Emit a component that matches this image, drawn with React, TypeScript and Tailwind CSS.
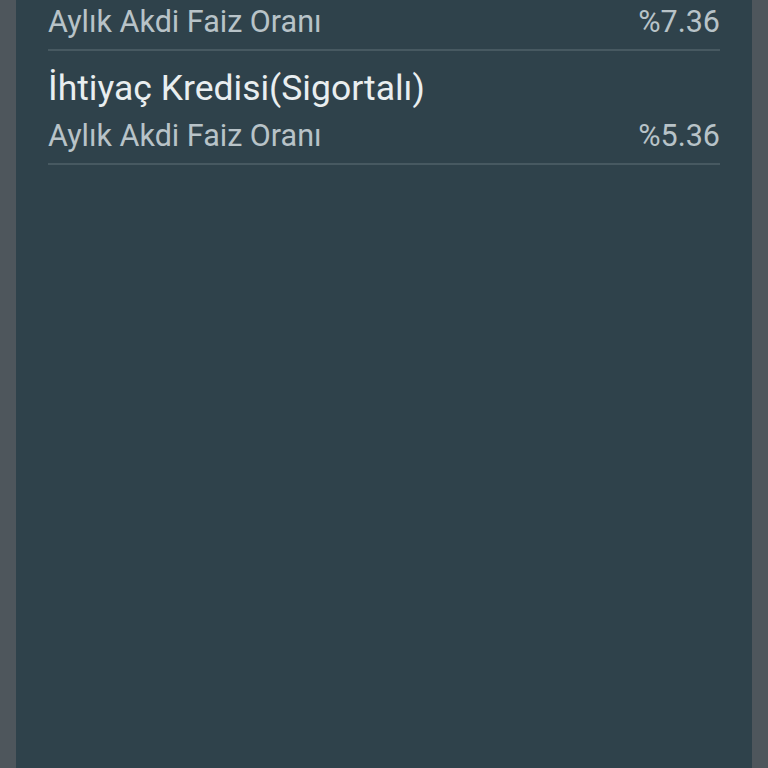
import React from 'react';

const rates = [
	{ title: null, label: 'Aylık Akdi Faiz Oranı', value: '%7.36' },
	{ title: 'İhtiyaç Kredisi(Sigortalı)', label: 'Aylık Akdi Faiz Oranı', value: '%5.36' },
];

export default function App() {
	return (
		<div
			className="flex h-[768px] w-[768px] bg-[#4e565c]"
			style={{ fontFamily: 'Roboto, "Noto Sans", sans-serif' }}>
			<div className="w-4 shrink-0" />
			<div className="flex-1 bg-[#2f424b] px-8 pt-[3.6px]">
				{rates.map((r, i) => (
					<div key={i} className={r.title ? 'pt-[16px]' : ''}>
						{r.title && (
							<div className="text-[35.5px] leading-[42px] text-[#e9eef0]">{r.title}</div>
						)}
						<div
							className={`flex items-baseline justify-between text-[30.5px] leading-[36px] text-[#b8c3c8] ${
								r.title ? 'mt-[9.5px]' : ''
							}`}>
							<span>{r.label}</span>
							<span>{r.value}</span>
						</div>
						<div className="mt-[9px] h-[2px] bg-[#475961]" />
					</div>
				))}
			</div>
			<div className="w-4 shrink-0" />
		</div>
	);
}
